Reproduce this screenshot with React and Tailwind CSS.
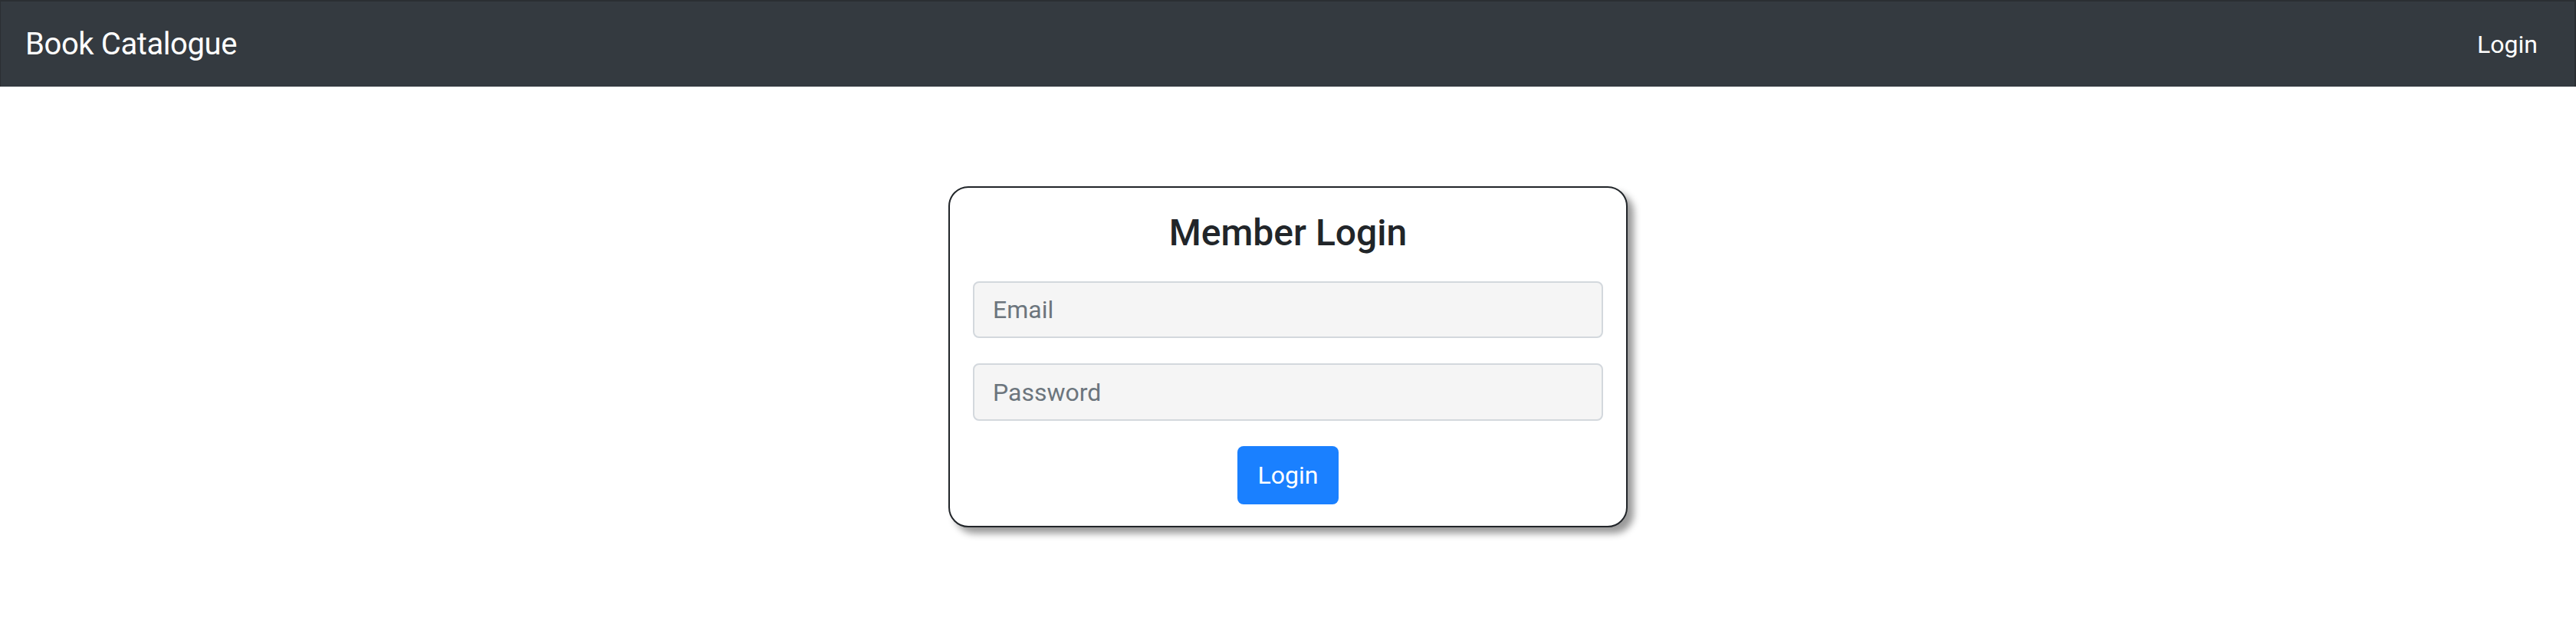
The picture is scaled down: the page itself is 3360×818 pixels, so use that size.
import React from "react";

export default function App() {
  return (
    <div className="min-h-[818px] bg-white" style={{ fontFamily: 'Roboto, Inter, "Noto Sans", "Liberation Sans", sans-serif' }}>
      <nav className="h-[113px] bg-[#343a40] border-t-2 border-l border-r-2 border-[#2b2f33] flex items-center justify-between pl-[32px] pr-[48px]">
        <span className="text-[40px] leading-[48px] tracking-[-0.01em] text-white">Book Catalogue</span>
        <span className="text-[32px] leading-[48px] text-white">Login</span>
      </nav>
      <div className="flex justify-center pt-[130px]">
        <div className="w-[886px] bg-white border-2 border-[#212529] rounded-[26px] shadow-[8px_8px_10px_rgba(0,0,0,0.4)] px-[30px] pt-[30px] pb-[28px] flex flex-col">
          <h4 className="text-[48px] leading-[58px] font-medium text-[#212529] text-center mb-[34px]">Member Login</h4>
          <input
            type="email"
            placeholder="Email"
            className="w-full h-[74px] border-2 border-[#d3d8dd] bg-[#f5f5f5] rounded-[8px] px-[24px] text-[32px] text-[#495057] placeholder:text-[#6c757d] outline-none"
          />
          <input
            type="password"
            placeholder="Password"
            className="w-full h-[75px] mt-[33px] border-2 border-[#d3d8dd] bg-[#f5f5f5] rounded-[8px] px-[24px] text-[32px] text-[#495057] placeholder:text-[#6c757d] outline-none"
          />
          <div className="flex justify-center mt-[33px]">
            <button className="w-[132px] h-[76px] bg-[#1a80ff] rounded-[8px] text-[32px] text-white">Login</button>
          </div>
        </div>
      </div>
    </div>
  );
}
